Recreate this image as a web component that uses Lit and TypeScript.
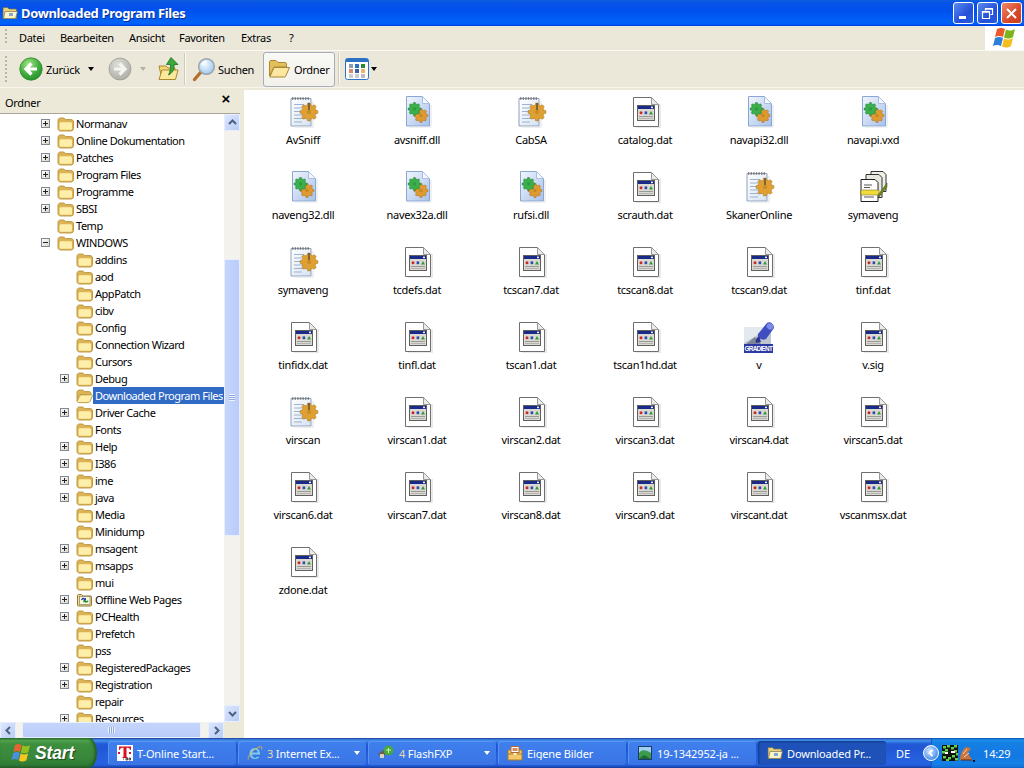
import { LitElement, html, css, svg } from "lit";
import { customElement } from "lit/decorators.js";

function gearPts(cx: number, cy: number, r: number, teeth = 8) {
  const p: string[] = [];
  for (let i = 0; i < teeth; i++) {
    const a = (i / teeth) * Math.PI * 2;
    const s = Math.PI / teeth;
    const q = (rad: number, ang: number) => `${(cx + rad * Math.cos(ang)).toFixed(1)},${(cy + rad * Math.sin(ang)).toFixed(1)}`;
    p.push(q(r * 0.8, a - s * 0.62), q(r, a - s * 0.36), q(r, a + s * 0.36), q(r * 0.8, a + s * 0.62));
  }
  return p.join(" ");
}
const gear = (cx: number, cy: number, r: number, fill: string, edge: string) => svg`
  <polygon points=${gearPts(cx, cy, r)} fill=${fill} stroke=${edge} stroke-width=".5"/>
  <circle cx=${cx} cy=${cy} r=${r * 0.22} fill=${edge} opacity=".45"/>`;

const datIcon = html`<svg width="32" height="32" viewBox="0 0 32 32">
  <path d="M31 8v24H7" fill="none" stroke="#d4d4d4" stroke-width="1"/>
  <path d="M4.500 1.500h18l7 7v22h-25z" fill="#fff" stroke="#6f6f6f"/>
  <path d="M22.500 1.500v7h7z" fill="#ecece6" stroke="#999"/>
  <rect x="8.500" y="9.500" width="17" height="15" fill="#dcd9d1" stroke="#5f5f5f"/>
  <rect x="9" y="10" width="16" height="3" fill="#1a2a8a"/>
  <rect x="22" y="10.600" width="2" height="1.600" fill="#eee"/>
  <circle cx="12" cy="16.800" r="1.500" fill="#c8282a"/><rect x="15.600" y="15.400" width="2.600" height="2.800" fill="#2a4ab8"/>
  <path d="M20 18.400l2-3.400 2 3.400z" fill="#2a9a3a"/>
  <path d="M10 20.500h14" stroke="#999"/><path d="M10 22.500h14" stroke="#b4b4b4"/>
</svg>`;

const dllIcon = html`<svg width="32" height="32" viewBox="0 0 32 32">
  <path d="M5.500 .5h16l7 7v22.500h-23z" fill="url(#dllg)" stroke="#8aa6d2"/>
  <path d="M21.500 .5v7h7z" fill="#f4f8fe" stroke="#a9c0e2"/>
  <path d="M30 9v22H8" fill="none" stroke="#dfe2e8"/>
  ${gear(20, 19.500, 7, "#dd9a30", "#a9691a")}
  ${gear(13.500, 13, 6.500, "#3aaf4c", "#1d7a2e")}
</svg>`;

const cfgIcon = html`<svg width="32" height="32" viewBox="0 0 32 32">
  <path d="M4 2.500h20v27.500H4z" fill="url(#cfgg)" stroke="#8ea3bd"/>
  <path d="M26 5v26H7" fill="none" stroke="#dcdfe4"/>
  <path d="M5 2.500h18" stroke="#777" stroke-width="2.400" stroke-dasharray="1.400 1.200"/>
  <path d="M7 8.500h10M7 12h8M7 15.500h8M7 19h9M7 22.500h12M7 26h8" stroke="#9db2cf"/>
  ${gear(22, 16, 9, "#dfa032", "#a8701c")}
  <rect x="21.300" y="7" width="1.400" height="7" fill="#5a4a30"/>
</svg>`;

const symIcon = html`<svg width="32" height="32" viewBox="0 0 32 32">
  <path d="M14 .5h12l3 3v17H14z" fill="#f0f0e8" stroke="#333"/>
  <path d="M9 3.500h13l3 3v20H9z" fill="#e8e8e0" stroke="#333"/>
  <path d="M4 8.500h14l3 3v19H4z" fill="#fff" stroke="#222"/>
  <path d="M7 14h8M7 16.500h6M7 26h10" stroke="#555"/>
  <rect x="4" y="19" width="18" height="5" fill="#f2dc3a" stroke="#6a6020" stroke-width=".5"/>
  <path d="M21 24l9-12v4l-8 10z" fill="#6f8a24" stroke="#3d4f12" stroke-width=".5"/>
</svg>`;

const gradIcon = html`<svg width="32" height="32" viewBox="0 0 32 32">
  <rect x="1" y="6" width="27" height="18" fill="#bfc6d2"/>
  <path d="M1 6h27L1 22z" fill="#e4e8ef"/>
  <path d="M3 23l9-7 6 7z" fill="#7d859a"/>
  <path d="M15 13l9-11c3-2 7 1 7 5l-8 11c-4 2-9-1-8-5z" fill="#3f4fc0"/>
  <ellipse cx="27" cy="5.500" rx="3.500" ry="3" fill="#7d8bea" transform="rotate(35 27 5.500)"/>
  <path d="M16 15c-3 2-4 5-3 7l5-1z" fill="#2a348c"/>
  <rect x="1" y="23" width="29" height="9" fill="#2c39a4"/>
  <text x="15.500" y="30" text-anchor="middle" font-family="Liberation Sans,sans-serif" font-size="6.400" font-weight="700" fill="#fff" textLength="28">GRADIENT</text>
</svg>`;

const folderClosed = html`<svg class="fi" width="17" height="16" viewBox="0 0 17 16">
  <path d="M1 4.500C1 3 2 2 3.500 2h2.800c.8 0 1.200.3 1.700 1l.5.600h5.500c1.500 0 2.500 1 2.500 2.400v6.500c0 1.500-1 2.500-2.500 2.500h-10C2 15 1 14 1 12.500z" fill="#dcb455" stroke="#b8923c" stroke-width=".9"/>
  <path d="M2.500 7.800c0-1 .6-1.600 1.500-1.600h9.500c.9 0 1.500.6 1.500 1.600v4.400c0 1-.6 1.500-1.500 1.500H4c-.9 0-1.500-.5-1.500-1.500z" fill="#fdeeaa"/>
</svg>`;
const folderOpen = html`<svg class="fi" width="17" height="16" viewBox="0 0 17 16">
  <path d="M1 4.500C1 3 2 2 3.500 2h2.800c.8 0 1.200.3 1.700 1l.5.600h4.500c1.200 0 2 .8 2 2V7H5l-4 6z" fill="#dcb455" stroke="#b8923c" stroke-width=".9"/>
  <path d="M4.500 6.800h10.800c1 0 1.400.7 1 1.500l-2.300 5c-.4.9-1 1.300-2 1.300H2.800c-1.300 0-2-1-1.400-2l2-4.500c.3-.9.800-1.300 1.600-1.300z" fill="#fdeeaa" stroke="#b8923c" stroke-width=".9"/>
</svg>`;
const folderWeb = html`<svg class="fi" width="17" height="16" viewBox="0 0 17 16">
  <path d="M1.500 3.500c0-.6.400-1 1-1h3l1.500 1.500H14.500c.6 0 1 .4 1 1v8c0 .6-.4 1-1 1h-12c-.6 0-1-.4-1-1z" fill="#f2dc8a" stroke="#8f7a3a"/>
  <rect x="3.500" y="4.500" width="10.500" height="8" fill="#fdf7dc" stroke="#555" stroke-width=".5"/>
  <path d="M5 7.500c1-2 3-2 4-1l1-.8v2.800H7.300l1-.8c-.8-.5-2-.4-2.500.6z" fill="#1c3fb0"/>
  <path d="M12.500 9c-1 2-3 2-4 1l-1 .8V8h2.700l-1 .8c.8.500 2 .4 2.500-.6z" fill="#1c8a3a"/>
</svg>`;

const bigFolderOpen = html`<svg width="24" height="24" viewBox="0 0 24 24">
  <path d="M2.500 5c0-1 .7-1.500 1.500-1.500h5l2 2h7c1 0 1.500.6 1.500 1.500v3H7l-4.500 9z" fill="#e3bf5a" stroke="#a98733"/>
  <path d="M7 10.500h15.500l-4 9c-.2.4-.5.500-1 .5H2.800z" fill="#fbe7a0" stroke="#a98733"/>
</svg>`;
const titleFolder = html`<svg width="16" height="16" viewBox="0 0 16 16">
  <path d="M1 3.500c0-.6.400-1 1-1h3.500L7 4h6.500c.6 0 1 .4 1 1v8.500H1z" fill="#e9d07a" stroke="#6f6a50" stroke-width=".7"/>
  <path d="M3 6.500h12.500l-2 7H1.500z" fill="#fdf4c8" stroke="#7c7650" stroke-width=".7"/>
  <rect x="7" y="8" width="4" height="3" fill="#7fa8d8"/>
</svg>`;

const backIcon = html`<svg width="24" height="24" viewBox="0 0 24 24">
  <circle cx="12" cy="12" r="11.200" fill="url(#greeng)" stroke="#2f8a2a" stroke-width=".8"/>
  <path d="M18 12H7.500M12.500 6.500L7 12l5.500 5.500" fill="none" stroke="#fff" stroke-width="3.200"/>
</svg>`;
const fwdIcon = html`<svg width="24" height="24" viewBox="0 0 24 24">
  <circle cx="12" cy="12" r="11" fill="url(#greyg)" stroke="#9c9c96" stroke-width=".8"/>
  <path d="M6 12h10.500M11.500 6.500L17 12l-5.500 5.500" fill="none" stroke="#f4f4f0" stroke-width="3.200"/>
</svg>`;
const upIcon = html`<svg width="24" height="26" viewBox="0 0 24 26">
  <path d="M2 10h7l2 2h7v11H5z" fill="#f4d672" stroke="#a98a30"/>
  <path d="M5 14h16l-2.500 9.500H2z" fill="#fbe89a" stroke="#a98a30"/>
  <path d="M14 1.500l7 7h-3.800c0 5-1.500 8.500-5.700 10.500 1.800-3.500 2-7 2-10.500H9.500z" fill="#3aa83a" stroke="#1c6e22" stroke-width=".8"/>
</svg>`;
const searchIcon = html`<svg width="25" height="25" viewBox="0 0 25 25">
  <path d="M9 15L2.500 22.500" stroke="#b2702c" stroke-width="3.400" stroke-linecap="round"/>
  <circle cx="14.500" cy="9.500" r="7.800" fill="url(#lensg)" stroke="#9aa4ac" stroke-width="1.500"/>
  <path d="M10 8c1-2.500 3-3.500 5-3.500" stroke="#fff" stroke-width="1.400" fill="none"/>
</svg>`;
const viewsIcon = html`<svg width="24" height="22" viewBox="0 0 24 22">
  <rect x=".5" y=".5" width="23" height="21" rx="2" fill="#fdfdfa" stroke="#2b72c4"/>
  <rect x="1" y="1" width="22" height="3" fill="#2b72c4"/>
  ${[
    ["#8a9bb4", "#2f6fc4", "#2a8a3a"],
    ["#d98a70", "#3a5fa8", "#e8b468"],
    ["#c8ccd4", "#c4ccd8", "#bcbcc0"],
  ].map((r, j) => r.map((c, i) => svg`<rect x=${4 + i * 6} y=${6 + j * 5} width="4" height="4" fill=${c}/>`))}
</svg>`;
const flag = html`<svg width="26" height="22" viewBox="0 0 26 22">
  <path d="M5 2c3-1.500 5-1.500 8 0l-2 8C8 8.500 6 8.500 3 10z" fill="#ea5a2a"/>
  <path d="M14 2.500c3 1.500 5 1.500 9-.5l-2 8c-3 2-6 2-9 .5z" fill="#7ab51d"/>
  <path d="M3 11c3-1.500 5-1.500 8 0l-2 8c-3-1.500-5-1.500-8 0z" fill="#2f7ed8"/>
  <path d="M12 11.500c3 1.500 5.500 1.500 9-.5l-2 8c-3 2-6 2-9 .5z" fill="#f5bd1e"/>
</svg>`;
const startFlag = html`<svg width="21" height="20" viewBox="0 0 21 20">
  <path d="M4 2c2.500-1.300 4.500-1.300 6.500 0l-1.600 7C6.700 7.800 5 7.800 2.500 9z" fill="#e9632e"/>
  <path d="M11.500 2.300c2.500 1.300 4.500 1.300 7.500-.3l-1.700 7c-2.500 1.700-5 1.700-7.400.4z" fill="#95c11f"/>
  <path d="M2.300 10c2.500-1.300 4.500-1.300 6.400 0l-1.600 7c-2.200-1.300-4-1.300-6.500 0z" fill="#4a8fe0"/>
  <path d="M9.600 10.500c2.500 1.300 4.700 1.300 7.500-.3l-1.700 7c-2.500 1.700-5 1.700-7.400.4z" fill="#f9c820"/>
</svg>`;

const tOnline = html`<svg width="16" height="16" viewBox="0 0 16 16">
  <rect width="16" height="16" fill="#fff"/>
  <path d="M2 1.500h12v3.500l-1-.2c-.3-1.300-1-2-2-2H9.500v8.500c0 .8.300 1 1.200 1v.7H5.300v-.7c.9 0 1.200-.2 1.200-1V2.800H5c-1 0-1.700.7-2 2l-1 .2z" fill="#d8101f"/>
  <rect x="1" y="7" width="2" height="2" fill="#d8101f"/><rect x="12" y="7" width="2" height="2" fill="#d8101f"/>
  <path d="M6 14h1M9 13h1.500v2H9zM12 13h1.500v2H12z" stroke="#222" fill="none" stroke-width=".8"/>
</svg>`;
const ieIcon = html`<svg width="16" height="16" viewBox="0 0 16 16">
  <path d="M8 2.500c-3.500 0-6 2.500-6 6s2.500 6 6 6c2.500 0 4.300-1.200 5.200-3.200H10c-.5.800-1.100 1.100-2 1.100-1.300 0-2.300-1-2.400-2.300h8c.4-4-2-7.600-5.600-7.600zM5.700 7.100c.2-1.200 1.100-2 2.300-2s2.100.8 2.300 2z" fill="#7cc4f4" stroke="#2a6ec4" stroke-width=".7"/>
  <path d="M1.300 14.500C0 12.500 5 5 12 2c2.500-1 3.500 0 2.500 2.500" fill="none" stroke="#e8b040" stroke-width=".9"/>
</svg>`;
const fxpIcon = html`<svg width="18" height="16" viewBox="0 0 18 16">
  <path d="M1 9l8-6 3 2-7 8z" fill="#6a5a48"/>
  <circle cx="11.500" cy="5.500" r="5" fill="#46a83e"/>
  <path d="M9 5h5M11.500 3v5" stroke="#c8f0c0"/>
  <rect x="3" y="9" width="4" height="4" fill="#d8d0c0"/>
</svg>`;
const picFolder = html`<svg width="16" height="16" viewBox="0 0 16 16">
  <path d="M1 5h14v10H1z" fill="#f2c868" stroke="#a97c28"/>
  <rect x="4" y="1.500" width="8" height="6" fill="#fff" stroke="#b06a3a"/>
  <rect x="5.500" y="3" width="5" height="3" fill="#d88a60"/>
  <path d="M1 9h14" stroke="#a97c28"/><rect x="6.500" y="8" width="3" height="2" fill="#fff3c8"/>
</svg>`;
const picIcon = html`<svg width="16" height="16" viewBox="0 0 16 16">
  <rect x="1" y="1" width="14" height="14" fill="#1c3a6c"/>
  <rect x="2" y="2" width="12" height="6" fill="#9fd0ee"/>
  <path d="M2 8c3-4 7-3 12 0v6H2z" fill="#3c9a4a"/>
  <path d="M2 14l5-4 7 4z" fill="#1e6a34"/>
</svg>`;
const trayGreen = html`<svg width="16" height="16" viewBox="0 0 16 16">
  <rect width="16" height="16" fill="#111"/>
  ${[[1,1],[5,0],[9,2],[12,0],[0,6],[3,4],[12,5],[14,8],[1,11],[6,12],[10,10],[13,13],[4,14]].map(([x,y]) => svg`<rect x=${x} y=${y} width="3" height="2.500" fill="#5fd04a"/>`)}
  <rect x="3" y="7" width="3" height="2" fill="#fff"/><rect x="9" y="6" width="4" height="2" fill="#fff"/>
</svg>`;
const trayFig = html`<svg width="17" height="17" viewBox="0 0 17 17">
  <path d="M2 15c0-5 2-10 6-13 3 0 4 1 5 2-2 1-3 3-3 5l4 5v1z" fill="#c8743a"/>
  <path d="M5 9l4-5M6 12l5-4" stroke="#f0d8c0"/><path d="M3 15h11" stroke="#5a2c14"/>
  <rect x="15" y="15" width="2" height="2" fill="#111"/>
</svg>`;

type Row = [string, 0 | 1, boolean, ("web" | "open")?];
const tree: Row[] = [
  ["Normanav", 0, true], ["Online Dokumentation", 0, true], ["Patches", 0, true], ["Program Files", 0, true],
  ["Programme", 0, true], ["SBSI", 0, true], ["Temp", 0, false], ["WINDOWS", 0, true],
  ["addins", 1, false], ["aod", 1, false], ["AppPatch", 1, false], ["cibv", 1, false], ["Config", 1, false],
  ["Connection Wizard", 1, false], ["Cursors", 1, false], ["Debug", 1, true],
  ["Downloaded Program Files", 1, false, "open"], ["Driver Cache", 1, true], ["Fonts", 1, false], ["Help", 1, true],
  ["I386", 1, true], ["ime", 1, true], ["java", 1, true], ["Media", 1, false], ["Minidump", 1, false],
  ["msagent", 1, true], ["msapps", 1, true], ["mui", 1, false], ["Offline Web Pages", 1, true, "web"],
  ["PCHealth", 1, true], ["Prefetch", 1, false], ["pss", 1, false], ["RegisteredPackages", 1, true],
  ["Registration", 1, true], ["repair", 1, false], ["Resources", 1, true],
];

const files: [string, any][] = [
  ["AvSniff", cfgIcon], ["avsniff.dll", dllIcon], ["CabSA", cfgIcon], ["catalog.dat", datIcon], ["navapi32.dll", dllIcon], ["navapi.vxd", dllIcon],
  ["naveng32.dll", dllIcon], ["navex32a.dll", dllIcon], ["rufsi.dll", dllIcon], ["scrauth.dat", datIcon], ["SkanerOnline", cfgIcon], ["symaveng", symIcon],
  ["symaveng", cfgIcon], ["tcdefs.dat", datIcon], ["tcscan7.dat", datIcon], ["tcscan8.dat", datIcon], ["tcscan9.dat", datIcon], ["tinf.dat", datIcon],
  ["tinfidx.dat", datIcon], ["tinfl.dat", datIcon], ["tscan1.dat", datIcon], ["tscan1hd.dat", datIcon], ["v", gradIcon], ["v.sig", datIcon],
  ["virscan", cfgIcon], ["virscan1.dat", datIcon], ["virscan2.dat", datIcon], ["virscan3.dat", datIcon], ["virscan4.dat", datIcon], ["virscan5.dat", datIcon],
  ["virscan6.dat", datIcon], ["virscan7.dat", datIcon], ["virscan8.dat", datIcon], ["virscan9.dat", datIcon], ["virscant.dat", datIcon], ["vscanmsx.dat", datIcon],
  ["zdone.dat", datIcon],
];

const chev = (d: string) => html`<svg width="9" height="9" viewBox="0 0 9 9"><path d=${d} fill="none" stroke="#4d6185" stroke-width="2"/></svg>`;

@customElement("app-root")
export class AppRoot extends LitElement {
  static styles = css`
    :host { display: block; width: 1024px; height: 768px; overflow: hidden; font: 11px/13px "Noto Sans", "DejaVu Sans", sans-serif; letter-spacing: -.3px; color: #000; }
    .win { display: flex; flex-direction: column; width: 1024px; height: 768px; background: #ece9d8; }
    .defs { display: block; width: 0; height: 0; }
    .title { height: 26px; flex: none; display: flex; align-items: center; background: linear-gradient(180deg, #0a5fdc 0, #0a54e6 8%, #0050ee 40%, #0063f8 88%, #005bff 93%, #003dd7 100%); color: #fff; font-weight: 700; font-size: 13px; letter-spacing: -.35px; text-shadow: 1px 1px #0f2f8f; padding-left: 2px; }
    .title span { margin-left: 3px; flex: 1; }
    .tb { display: flex; gap: 3px; padding-right: 2px; }
    .wb { height: 20px; border: 1px solid #fff; border-radius: 3px; background: linear-gradient(135deg, #5d8af0, #2450d8 60%, #2a5ae0); display: flex; align-items: center; justify-content: center; box-sizing: content-box; width: 19px; }
    .wb.close { background: linear-gradient(135deg, #ec8a68, #d8482a 60%, #c8401f); }
    .menu { height: 25px; flex: none; display: grid; grid-template-columns: 19px 41px 69px 50px 62px 48px 20px 1fr 39px; align-items: center; background: #ebe8da; border-bottom: 1px solid #fbfaf5; box-sizing: border-box; padding-bottom: 2px; }
    .flagbox { height: 24px; margin-bottom: -2px; background: #fff; display: flex; align-items: center; justify-content: center; }
    .grip { width: 2px; height: 70%; margin-left: 5px; background: repeating-linear-gradient(180deg, #b8b5a6 0 2px, transparent 2px 4px); }
    .toolbar { height: 37px; flex: none; display: grid; grid-template-columns: 19px 27px 41px 21px 31px 18px 27px 8px 26px 45px 75px 7px 25px 1fr; align-items: center; background: #ebe8da; border-bottom: 1px solid #f7f5ec; box-sizing: border-box; }
    .cell { display: flex; align-items: center; }
    .arrow { width: 0; height: 0; border: 3px solid transparent; border-top: 4px solid #000; border-bottom: 0; margin-left: 1px; }
    .arrow.off { border-top-color: #b4b2a6; }
    .sep { width: 1px; height: 32px; background: #cfccbd; box-shadow: 1px 0 #f9f8f2; }
    .folderbtn { height: 35px; width: 72px; box-sizing: border-box; border: 1px solid #a7adbb; border-radius: 3px; background: linear-gradient(#f9f9f5, #f2f1ea); display: flex; align-items: center; gap: 3px; padding-left: 3px; }
    .main { flex: 1; min-height: 0; display: flex; }
    .left { width: 240px; flex: none; display: flex; flex-direction: column; }
    .head { height: 26px; flex: none; box-sizing: border-box; display: flex; align-items: center; justify-content: space-between; padding: 3px 10px 0 5px; border-bottom: 1px solid #aca899; }
    .x { font-size: 15px; font-weight: 700; font-family: "Liberation Sans", sans-serif; margin-top: -8px; }
    .treewrap { flex: 1; min-height: 0; display: grid; grid-template-columns: 224px 16px; grid-template-rows: 1fr 16px; background: #fff; }
    .tree { overflow: hidden; padding-top: 1px; letter-spacing: -.47px; }
    .row { height: 17px; display: flex; align-items: center; white-space: nowrap; }
    .row.d0 { padding-left: 41px; }
    .row.d1 { padding-left: 60px; }
    .exp { width: 16px; flex: none; height: 9px; }
    .box { display: block; width: 9px; height: 9px; box-sizing: border-box; border: 1px solid #7f8a96; background: linear-gradient(135deg, #fff, #d8d5c8); }
    .box svg { display: block; }
    .fi { flex: none; }
    .lbl { margin-left: 0; padding: 0 2px; height: 17px; line-height: 17px; }
    .lbl.sel { background: #316ac5; color: #fff; }
    .vbar { display: flex; flex-direction: column; background: #f4f2ec; }
    .sb { flex: none; width: 16px; height: 17px; background: linear-gradient(135deg, #dfe8fd, #b7cbf6); border-radius: 2px; display: flex; align-items: center; justify-content: center; box-shadow: inset 0 0 0 1px #e8eefc; }
    .vtrack { flex: 1; padding-top: 128px; min-height: 0; }
    .vthumb { height: 277px; background: linear-gradient(90deg, #c5d6fc, #b9ccf8); border: 1px solid #e8eefc; box-sizing: border-box; border-radius: 2px; display: flex; align-items: center; justify-content: center; }
    .hbar { display: flex; background: #f4f2ec; grid-column: 1; }
    .htrack { flex: 1; padding: 0 7px 0 6px; display: flex; }
    .hthumb { flex: 1; background: linear-gradient(#c5d6fc, #b9ccf8); border: 1px solid #e8eefc; border-radius: 2px; display: flex; align-items: center; justify-content: center; }
    .corner { background: #ece9d8; }
    .gv { width: 6px; height: 7px; background: repeating-linear-gradient(180deg, #eef3fe 0 1px, #8ea6d8 1px 2px); }
    .gh { width: 7px; height: 6px; background: repeating-linear-gradient(90deg, #eef3fe 0 1px, #8ea6d8 1px 2px); }
    .gutter { width: 4px; flex: none; }
    .files { flex: 1; background: #fff; margin-top: 2px; padding: 6px 0 0 2px; display: grid; grid-template-columns: repeat(6, 114px); grid-auto-rows: 75px; align-content: start; }
    .file { display: flex; flex-direction: column; align-items: center; gap: 5px; }
    .file svg { display: block; }
    .file span { line-height: 13px; white-space: nowrap; }
    .taskbar { height: 30px; flex: none; display: flex; align-items: center; color: #fff; letter-spacing: -.15px; background: linear-gradient(#1f2f86 0, #3165c4 3%, #3682e5 6%, #4490e6 10%, #3883e5 12%, #2b71e0 15%, #2663da 18%, #235bd6 20%, #2258d5 23%, #2157d6 38%, #245ddb 54%, #2562df 86%, #245fdc 89%, #2158d4 92%, #1d4ec0 95%, #1941a5 98%); }
    .start { width: 97px; height: 30px; flex: none; box-sizing: border-box; padding-left: 11px; display: flex; align-items: center; gap: 3px; border-radius: 0 10px 10px 0 / 0 18px 18px 0; background: linear-gradient(#2f7a34 0, #4fa24e 8%, #3f8f3f 20%, #37863a 70%, #2f7a34 90%, #245f28 100%); font: italic 700 17.500px "Liberation Sans", sans-serif; text-shadow: 1px 1px 1px #1a4a1c; box-shadow: inset -2px 0 3px #1f5a24; }
    .tasks { display: flex; gap: 2px; margin-left: 11px; height: 24px; }
    .task { width: 128px; box-sizing: border-box; border-radius: 3px; padding: 0 6px 0 9px; display: flex; align-items: center; gap: 4px; background: linear-gradient(#3f80ee, #3b74e4); white-space: nowrap; box-shadow: inset 1px 1px #5c95f0; }
    .task.on { background: #1e52b8; box-shadow: inset 1px 1px 2px #123a88; }
    .task b { font-weight: 400; color: #e8d8a8; }
    .task .t { flex: 1; overflow: hidden; }
    .ta { width: 0; height: 0; border: 3px solid transparent; border-top: 4px solid #fff; border-bottom: 0; }
    .lang { width: 45px; flex: none; box-sizing: border-box; padding-left: 10px; }
    .tray { flex: 1; height: 30px; display: flex; align-items: center; background: linear-gradient(#0c59b9 1%, #1a8ae8 6%, #1b8de8 10%, #1580e4 14%, #1478e2 60%, #1580e6 85%, #1478dc 94%, #0f62c9 100%); border-left: 1px solid #0f5cc0; box-sizing: border-box; }
    .chev { width: 16px; height: 16px; margin: 0 3px 0 -9px; border-radius: 50%; background: radial-gradient(circle at 40% 35%, #cfe6ff, #3f86ea 80%); border: 1px solid #fff; display: flex; align-items: center; justify-content: center; flex: none; box-sizing: border-box; }
    .clock { margin-left: 8px; }
  `;

  private renderRow(r: Row) {
    const [name, depth, exp, kind] = r;
    const sel = kind === "open";
    const icon = kind === "web" ? folderWeb : sel ? folderOpen : folderClosed;
    const minus = name === "WINDOWS";
    return html`<div class="row d${depth}">
      <span class="exp">${exp ? html`<span class="box"><svg width="7" height="7" viewBox="0 0 7 7"><path d=${minus ? "M1 3.500h5" : "M1 3.500h5M3.500 1v5"} stroke="#222"/></svg></span>` : ""}</span>
      ${icon}<span class="lbl ${sel ? "sel" : ""}">${name}</span>
    </div>`;
  }

  render() {
    return html`<div class="win">
      <svg class="defs"><defs>
        <linearGradient id="dllg" x1="0" y1="0" x2="1" y2="1"><stop offset="0" stop-color="#f2f6fd"/><stop offset="1" stop-color="#a7c1ea"/></linearGradient>
        <linearGradient id="cfgg" x1="0" y1="0" x2="1" y2="1"><stop offset="0" stop-color="#fff"/><stop offset="1" stop-color="#d6e2f2"/></linearGradient>
        <radialGradient id="greeng" cx=".4" cy=".3" r=".8"><stop offset="0" stop-color="#a5e88a"/><stop offset=".6" stop-color="#3ea83c"/><stop offset="1" stop-color="#1f8a2a"/></radialGradient>
        <radialGradient id="greyg" cx=".4" cy=".3" r=".8"><stop offset="0" stop-color="#dfdfd8"/><stop offset="1" stop-color="#a8a8a2"/></radialGradient>
        <radialGradient id="lensg" cx=".4" cy=".35" r=".7"><stop offset="0" stop-color="#f4fbff"/><stop offset="1" stop-color="#9cc4ea"/></radialGradient>
      </defs></svg>

      <div class="title">${titleFolder}<span>Downloaded Program Files</span>
        <div class="tb">
          <div class="wb"><svg width="13" height="13" viewBox="0 0 13 13"><rect x="2" y="9" width="7" height="3" fill="#fff"/></svg></div>
          <div class="wb"><svg width="13" height="13" viewBox="0 0 13 13"><path d="M4.500 3.500V1.500h7v6h-2M1.500 4.500h7v7h-7z" fill="none" stroke="#fff" stroke-width="1.200"/><path d="M1.500 5h7M4.500 2h7" stroke="#fff" stroke-width="1.600"/></svg></div>
          <div class="wb close"><svg width="13" height="13" viewBox="0 0 13 13"><path d="M2 2l9 9M11 2l-9 9" stroke="#fff" stroke-width="2"/></svg></div>
        </div>
      </div>

      <div class="menu">
        <div class="grip"></div>
        <span>Datei</span><span>Bearbeiten</span><span>Ansicht</span><span>Favoriten</span><span>Extras</span><span>?</span><span></span>
        <div class="flagbox">${flag}</div>
      </div>

      <div class="toolbar">
        <div class="grip"></div>
        <div class="cell">${backIcon}</div>
        <span>Zurück</span>
        <div class="cell"><span class="arrow"></span></div>
        <div class="cell">${fwdIcon}</div>
        <div class="cell"><span class="arrow off"></span></div>
        <div class="cell">${upIcon}</div>
        <div class="cell"><span class="sep"></span></div>
        <div class="cell">${searchIcon}</div>
        <span>Suchen</span>
        <div class="folderbtn">${bigFolderOpen}<span>Ordner</span></div>
        <div class="cell"><span class="sep"></span></div>
        <div class="cell">${viewsIcon}</div>
        <div class="cell"><span class="arrow"></span></div>
      </div>

      <div class="main">
        <div class="left">
          <div class="head"><span>Ordner</span><span class="x">×</span></div>
          <div class="treewrap">
            <div class="tree">${tree.map((r) => this.renderRow(r))}</div>
            <div class="vbar">
              <div class="sb">${chev("M1 6l3.500-3.500L8 6")}</div>
              <div class="vtrack"><div class="vthumb"><span class="gv"></span></div></div>
              <div class="sb">${chev("M1 3l3.500 3.500L8 3")}</div>
            </div>
            <div class="hbar">
              <div class="sb">${chev("M6 1L2.500 4.500 6 8")}</div>
              <div class="htrack"><div class="hthumb"><span class="gh"></span></div></div>
              <div class="sb">${chev("M3 1l3.500 3.500L3 8")}</div>
            </div>
            <div class="corner"></div>
          </div>
        </div>
        <div class="gutter"></div>
        <div class="files">${files.map(([n, i]) => html`<div class="file">${i}<span>${n}</span></div>`)}</div>
      </div>

      <div class="taskbar">
        <div class="start">${startFlag}<span>Start</span></div>
        <div class="tasks">
          <div class="task">${tOnline}<span class="t">T-Online Start...</span></div>
          <div class="task">${ieIcon}<span class="t"><b>3</b> Internet Ex...</span><span class="ta"></span></div>
          <div class="task">${fxpIcon}<span class="t"><b>4</b> FlashFXP</span><span class="ta"></span></div>
          <div class="task">${picFolder}<span class="t">Eigene Bilder</span></div>
          <div class="task">${picIcon}<span class="t">19-1342952-ja ...</span></div>
          <div class="task on">${titleFolder}<span class="t">Downloaded Pr...</span></div>
        </div>
        <div class="lang">DE</div>
        <div class="tray">
          <div class="chev"><svg width="8" height="8" viewBox="0 0 8 8"><path d="M5.500 1L2.500 4l3 3" fill="none" stroke="#fff" stroke-width="2"/></svg></div>
          ${trayGreen}${trayFig}<span class="clock">14:29</span>
        </div>
      </div>
    </div>`;
  }
}
